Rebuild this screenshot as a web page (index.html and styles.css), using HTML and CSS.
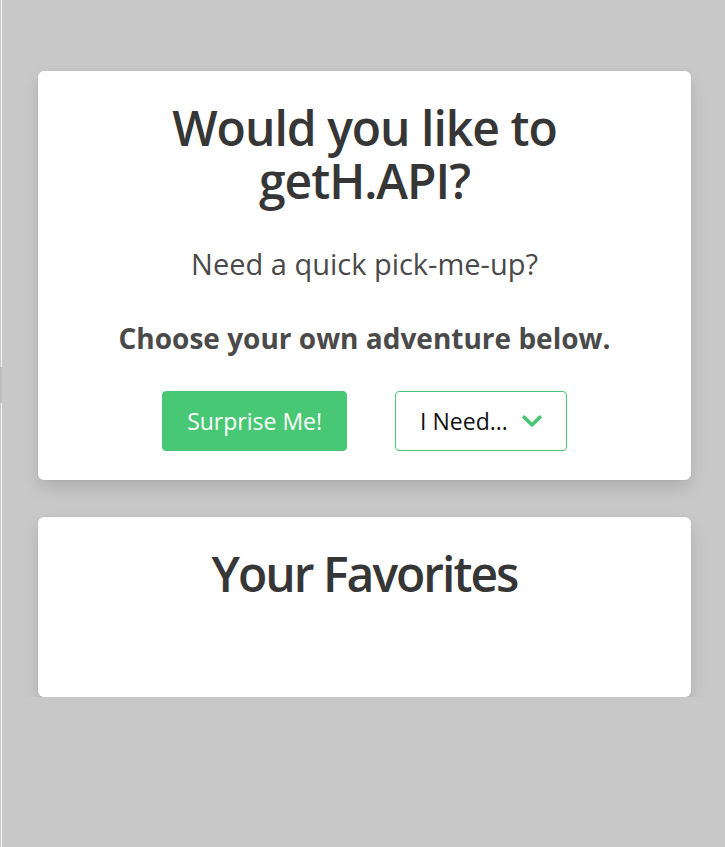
FILE: index.html
```html
<!DOCTYPE html>
<html lang="en">
<head>
<meta charset="utf-8">
<title>getH.API</title>
<link rel="stylesheet" href="styles.css">
</head>
<body>
<div class="edge-tab"></div>
<main class="container">
  <section class="box">
    <h1 class="title">Would you like to getH.API?</h1>
    <p class="subtitle">Need a quick pick-me-up?</p>
    <p class="lead">Choose your own adventure below.</p>
    <div class="buttons">
      <button class="btn btn-success">Surprise Me!</button>
      <button class="btn btn-outline">
        <span>I Need...</span>
        <svg class="chev" width="20" height="13" viewBox="0 0 20 13" aria-hidden="true">
          <path d="M2.2 2.2 L10 10 L17.8 2.2" fill="none" stroke="#48c774" stroke-width="3.6" stroke-linecap="round" stroke-linejoin="round"/>
        </svg>
      </button>
    </div>
  </section>
  <section class="box box-favs">
    <h2 class="title title-favs">Your Favorites</h2>
  </section>
</main>
</body>
</html>
```

FILE: styles.css
```css
html {
  background: linear-gradient(to right, #c8c8c8 0, #c8c8c8 1px, #f2f2f2 1px, #f2f2f2 2px, #c8c8c8 2px);
  min-height: 100%;
}
body {
  margin: 0;
  font-family: "Open Sans", "Noto Sans", sans-serif;
  color: #4a4a4a;
}
.edge-tab {
  position: absolute;
  left: 0;
  top: 367px;
  width: 2px;
  height: 36px;
  background: #bdbdbd;
}
.container {
  padding: 71px 34px 0 38px;
  display: flex;
  flex-direction: column;
  gap: 37px;
}
.box {
  background: #fff;
  border-radius: 6px;
  box-shadow: 0 8px 18px -2px rgba(10, 10, 10, 0.16), 0 0 0 1px rgba(10, 10, 10, 0.02);
  padding: 30px 20px 29px;
  text-align: center;
}
.box-favs {
  padding-bottom: 97px;
}
.title {
  margin: 0;
  font-size: 48px;
  line-height: 53px;
  font-weight: 600;
  color: #363636;
  letter-spacing: -1px;
  padding: 0 90px;
}
.title-favs {
  letter-spacing: -2px;
}
.subtitle {
  margin: 41px 0 0;
  font-size: 29px;
  line-height: 32px;
  font-weight: 400;
  color: #4a4a4a;
}
.lead {
  margin: 41px 0 0;
  font-size: 28px;
  line-height: 34px;
  font-weight: 700;
  color: #4a4a4a;
}
.buttons {
  margin-top: 36px;
  display: flex;
  justify-content: center;
  gap: 48px;
}
.btn {
  height: 60px;
  font-family: inherit;
  font-size: 23px;
  border-radius: 4px;
  padding: 0 24px;
  display: inline-flex;
  align-items: center;
  cursor: pointer;
}
.btn-success {
  background: #48c774;
  border: 1px solid #48c774;
  color: #fff;
}
.btn-outline {
  background: #fff;
  border: 1px solid #48c774;
  color: #111;
  gap: 14px;
  padding: 0 24px;
}
.chev {
  display: block;
}
```
